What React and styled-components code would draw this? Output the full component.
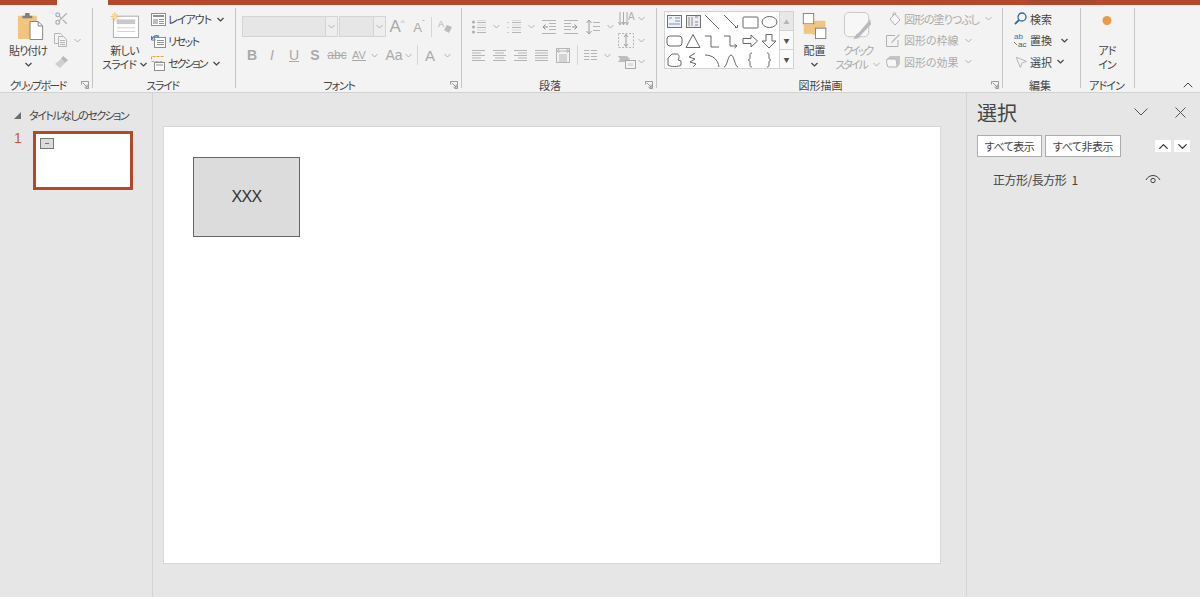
import React from 'react';
import styled, { createGlobalStyle } from 'styled-components';
import { Scissors, MousePointer2, ChevronDown, ChevronUp } from 'lucide-react';

const GlobalStyle = createGlobalStyle`
  html, body {
    margin: 0;
    height: 100%;
    overflow: hidden;
    background: #e6e6e6;
  }
  #root { height: 100%; }
  * { box-sizing: border-box; }
  body {
    font-family: "Noto Sans CJK JP", "Noto Sans", sans-serif;
    font-feature-settings: "palt";
    color: #444;
  }
`;

const Page = styled.div`
  width: 1200px;
  height: 597px;
  display: flex;
  flex-direction: column;
`;

const TitleStrip = styled.div`
  height: 5px;
  flex: none;
  background: #b7472a;
  display: flex;
  padding-left: 57px;
`;

const ActiveTab = styled.div`
  width: 51px;
  background: #f3f3f3;
`;

const TabHighlight = styled.div`
  width: 72px;
  height: 4px;
  margin-left: 919px;
  background: #a8492f;
  clip-path: polygon(0 0, 100% 0, 92% 100%, 8% 100%);
`;

const Ribbon = styled.div`
  height: 88px;
  flex: none;
  background: #f3f3f3;
  border-bottom: 1px solid #d2d2d2;
  display: flex;
  padding-top: 3px;
  position: relative;
`;

const Group = styled.section`
  width: ${p => p.$w}px;
  flex: none;
  height: 80px;
  border-right: 1px solid #c6c6c6;
  display: flex;
  flex-direction: column;
  position: relative;
`;

const GroupBody = styled.div`
  flex: 1;
  display: flex;
  min-height: 0;
  padding: ${p => p.$pad || '0'};
  gap: ${p => p.$gap || 0}px;
`;

const GroupLabel = styled.div`
  height: 15px;
  flex: none;
  margin-bottom: -5px;
  font-size: 11px;
  line-height: 15px;
  letter-spacing: ${p => p.$ls || 0}px;
  text-align: center;
  color: #444;
  white-space: nowrap;
  padding-right: ${p => p.$pr || 0}px;
`;

const Launcher = styled.svg`
  position: absolute;
  right: 3px;
  bottom: -1px;
  width: 8px;
  height: 8px;
`;

const BigButton = styled.div`
  width: ${p => p.$w}px;
  flex: none;
  padding-top: 4px;
  display: flex;
  flex-direction: column;
  align-items: center;
  font-size: 11px;
  line-height: 14px;
  color: ${p => (p.$off ? '#a9a9a9' : '#444')};
  white-space: nowrap;
`;

const BigIcon = styled.div`
  height: 28px;
  margin-bottom: 3px;
  padding-left: ${p => p.$shift || 0}px;
  padding-top: ${p => p.$drop || 0}px;
  display: flex;
  align-items: flex-start;
`;

const Line = styled.span`
  display: flex;
  align-items: center;
  height: 14px;
  letter-spacing: ${p => p.$ls || 0}px;
`;

const Stack = styled.div`
  display: flex;
  flex-direction: column;
  gap: ${p => p.$gap || 0}px;
  padding-top: ${p => p.$top || 0}px;
`;

const SmallRow = styled.div`
  height: ${p => p.$h || 21.5}px;
  display: flex;
  align-items: center;
  gap: ${p => p.$gap ?? 2}px;
  font-size: 11px;
  color: ${p => (p.$off ? '#ababab' : '#444')};
  white-space: nowrap;
`;

const RowText = styled.span`
  letter-spacing: ${p => p.$ls || 0}px;
`;

const Tools = styled.div`
  height: ${p => p.$h || 22}px;
  display: flex;
  align-items: center;
  gap: ${p => p.$gap || 0}px;
`;

const Slot = styled.div`
  width: ${p => p.$w}px;
  flex: none;
  display: flex;
  align-items: center;
  justify-content: ${p => (p.$start ? 'flex-start' : 'center')};
`;

const Divider = styled.div`
  width: 1px;
  height: 20px;
  background: #d6d6d6;
  flex: none;
`;

const FontSelect = styled.div`
  width: ${p => p.$w}px;
  height: 21px;
  flex: none;
  background: #e6e6e6;
  border: 1px solid #d4d4d4;
  display: flex;
  justify-content: flex-end;
`;

const SelectArrow = styled.div`
  width: 12px;
  background: #eeeeee;
  border-left: 1px solid #d4d4d4;
  display: flex;
  align-items: center;
  justify-content: center;
`;

const Glyph = styled.span`
  font-family: "Liberation Sans", sans-serif;
  font-size: ${p => p.$size || 14}px;
  font-weight: ${p => (p.$bold ? 700 : 400)};
  font-style: ${p => (p.$italic ? 'italic' : 'normal')};
  text-decoration: ${p => (p.$under ? 'underline' : p.$strike ? 'line-through' : 'none')};
  color: #a9a9a9;
  line-height: 1;
`;

const GlyphMark = styled.span`
  font-size: 8px;
  vertical-align: 7px;
`;

const Gallery = styled.div`
  width: 130px;
  height: 58px;
  flex: none;
  margin-top: 3px;
  background: #fff;
  border: 1px solid #d2d2d2;
  display: flex;
`;

const ShapeGrid = styled.div`
  width: 114px;
  display: grid;
  grid-template-columns: repeat(6, 19px);
  grid-template-rows: repeat(3, 19px);
  place-items: center;
`;

const GalleryScroll = styled.div`
  flex: 1;
  border-left: 1px solid #d2d2d2;
  display: flex;
  flex-direction: column;
`;

const ScrollStep = styled.div`
  flex: 1;
  background: ${p => (p.$off ? '#e8e8e8' : '#fafafa')};
  border-bottom: 1px solid #d2d2d2;
  display: flex;
  align-items: center;
  justify-content: center;
  font-size: 6px;
  color: ${p => (p.$off ? '#b5b5b5' : '#555')};
  &:last-child { border-bottom: 0; }
`;

const Collapse = styled.div`
  position: absolute;
  right: 4px;
  bottom: -1px;
  color: #444;
  display: flex;
`;

const Workspace = styled.div`
  flex: 1;
  display: flex;
  min-height: 0;
`;

const SlidePane = styled.aside`
  width: 153px;
  flex: none;
  border-right: 1px solid #d4d4d4;
  padding: 13px 0 0 14px;
`;

const SectionRow = styled.div`
  display: flex;
  align-items: center;
  gap: 8px;
  height: 18px;
  font-size: 11px;
  letter-spacing: -1.5px;
  color: #444;
  white-space: nowrap;
`;

const Triangle = styled.div`
  width: 0;
  height: 0;
  border-left: 7px solid transparent;
  border-bottom: 7px solid #6d6d6d;
`;

const ThumbRow = styled.div`
  display: flex;
  margin-top: 7px;
`;

const ThumbNumber = styled.div`
  width: 19px;
  flex: none;
  font-family: "Liberation Sans", sans-serif;
  font-size: 14px;
  line-height: 15px;
  color: #c8573a;
`;

const Thumb = styled.div`
  width: 100px;
  height: 59px;
  background: #fff;
  border: 3px solid #b7472a;
  position: relative;
`;

const ThumbShape = styled.div`
  position: absolute;
  left: 4px;
  top: 4px;
  width: 14px;
  height: 11px;
  background: #dcdcdc;
  border: 1px solid #777;
  display: flex;
  align-items: center;
  justify-content: center;
  &::after {
    content: "";
    width: 4px;
    height: 1px;
    background: #777;
  }
`;

const Editor = styled.main`
  flex: 1;
  padding: 34px 26px 0 11px;
`;

const Slide = styled.div`
  width: 776px;
  height: 436px;
  background: #fff;
  box-shadow: 0 0 0 1px #d6d6d6;
  position: relative;
`;

const SlideShape = styled.div`
  position: absolute;
  left: 29px;
  top: 30px;
  width: 107px;
  height: 80px;
  background: #dcdcdc;
  border: 1px solid #666;
  display: flex;
  align-items: center;
  justify-content: center;
  font-family: "Liberation Sans", sans-serif;
  font-size: 16px;
  letter-spacing: -0.7px;
  color: #333;
`;

const TaskPane = styled.aside`
  width: 235px;
  flex: none;
  border-left: 1px solid #d4d4d4;
  padding: 5px 11px 0 10px;
`;

const PaneHeader = styled.div`
  height: 28px;
  display: flex;
  align-items: center;
  justify-content: space-between;
  padding-right: 4px;
  color: #555;
`;

const PaneTitle = styled.h2`
  margin: 0;
  font-size: 20px;
  font-weight: 400;
  color: #444;
`;

const PaneIcons = styled.div`
  display: flex;
  align-items: center;
  gap: 27px;
`;

const PaneActions = styled.div`
  margin-top: 9px;
  display: flex;
  align-items: center;
  gap: 3px;
`;

const PaneButton = styled.button`
  height: 22px;
  width: ${p => p.$w}px;
  padding: 0;
  background: #fff;
  border: 1px solid #ababab;
  font: inherit;
  font-size: 11px;
  letter-spacing: -0.5px;
  color: #444;
  white-space: nowrap;
`;

const OrderButtons = styled.div`
  margin-left: auto;
  display: flex;
  gap: 3px;
`;

const OrderButton = styled.div`
  width: 16px;
  height: 12px;
  background: #fff;
  display: flex;
  align-items: center;
  justify-content: center;
  color: #333;
`;

const LayerRow = styled.div`
  margin-top: 11px;
  height: 22px;
  padding: 0 29px 0 16px;
  display: flex;
  align-items: center;
  justify-content: space-between;
  font-size: 12px;
  letter-spacing: -0.5px;
  word-spacing: 3px;
  color: #444;
`;

const Icon = ({ w = 16, h = 16, vb, children, ...rest }) => (
  <svg width={w} height={h} viewBox={vb || `0 0 ${w} ${h}`} fill="none" stroke="#b5b5b5" strokeWidth="1" {...rest}>
    {children}
  </svg>
);

const ChevSvg = styled.svg`
  width: 7px;
  height: 5px;
  flex: none;
  margin-left: ${p => p.$ml || 0}px;
  stroke: ${p => (p.$off ? '#b0b0b0' : '#444')};
  stroke-width: ${p => (p.$off ? 1 : 1.2)};
  fill: none;
`;

const Chev = ({ off, ml }) => (
  <ChevSvg viewBox="0 0 7 5" $off={off} $ml={ml}>
    <path d="M.5 1 3.5 4 6.5 1" />
  </ChevSvg>
);

const LauncherIcon = () => (
  <Launcher viewBox="0 0 9 9" fill="none" stroke="#8d8d8d">
    <path d="M.5 4V.5H8.5V8.5H5M2 2 7 7M7 4V7H4" />
  </Launcher>
);

const lines = (ys, x1, x2) => ys.map(y => `M${x1} ${y}H${x2}`).join('');

const PasteIcon = () => (
  <svg width="27" height="28" viewBox="0 0 30 31" fill="none">
    <rect x="1" y="4" width="21" height="26" rx="1" fill="#f1c47f" />
    <path d="M6 4h11v3H6zM9 1h5v3H9z" fill="#7f7f7f" />
    <path d="M14.500 10.500h9l5 5v15h-14z" fill="#fff" stroke="#7b7b7b" />
    <path d="M23.500 10.500v5h5" stroke="#7b7b7b" />
  </svg>
);

const NewSlideIcon = () => (
  <svg width="30" height="26" viewBox="0 0 32 28" fill="none">
    <rect x="3.500" y="4.500" width="27" height="23" fill="#fff" stroke="#a9a9a9" />
    <rect x="7" y="8" width="20" height="5" fill="#c9c9c9" />
    <path d="M7 17H27M7 21H27" stroke="#cfcfcf" />
    <path d="M5 .5v9M.5 5h9M2 2l6 6M8 2 2 8" stroke="#eab55a" />
    <rect x="3" y="3" width="4" height="4" fill="#f3d9a6" />
  </svg>
);

const LayoutIcon = () => (
  <Icon w={15} h={13} stroke="#8f8f8f">
    <rect x=".5" y=".5" width="14" height="12" fill="#fff" />
    <path d="M2 3h11" stroke="#8f8f8f" strokeWidth="2" />
    <rect x="2" y="6" width="5" height="5" fill="#bdbdbd" stroke="none" />
    <path d={lines([6.5, 8.5, 10.5], 8, 13)} />
  </Icon>
);

const ResetIcon = () => (
  <Icon w={15} h={14} stroke="#8f8f8f">
    <rect x="3.500" y="3.500" width="11" height="10" fill="#fff" />
    <path d={lines([6.5, 8.5, 10.5], 6, 13)} />
    <path d="M1 5C2 2 5 1 8 2.500" stroke="#4a78ad" strokeWidth="1.400" />
    <path d="M.5 2V6H4.500" stroke="#4a78ad" />
  </Icon>
);

const SectionIcon = () => (
  <Icon w={15} h={15} stroke="#8f8f8f">
    <path d="M.5 3.500V.5h13M.5 5.500h12" stroke="#e8a33d" strokeDasharray="3 1" />
    <rect x="3.500" y="6.500" width="10" height="8" fill="#fff" />
    <path d="M5 9h7" />
  </Icon>
);

const CopyIcon = () => (
  <Icon w={13} h={14}>
    <path d="M.5.5h6l2 2v8h-8z" fill="#f3f3f3" />
    <path d="M4.500 3.500h5l3 3v7h-8z" fill="#f3f3f3" />
    <path d={lines([7.5, 9.5, 11.5], 6, 11)} />
  </Icon>
);

const BrushIcon = () => (
  <Icon w={15} h={14} stroke="none">
    <path d="M9 1l5 4-3 3-4-4z" fill="#b8b8b8" />
    <path d="M7 4l4 4-5 5-5-4z" fill="#cfcfcf" />
  </Icon>
);

const ClearIcon = () => (
  <Icon w={16} h={15} stroke="none">
    <text x="0" y="8" fontSize="9" fontFamily="Liberation Sans" fill="#b0b0b0">A</text>
    <path d="M9 6l5 2-3 6-5-3z" fill="#bcbcbc" />
  </Icon>
);

const BulletIcon = ({ numbered }) => (
  <Icon w={14} h={14}>
    {numbered ? (
      <path d="M1 2v.6M1 7v.6M1 12v.6" stroke="#a8a8a8" strokeWidth="2.400" />
    ) : (
      <g fill="#adadad" stroke="none"><circle cx="1.500" cy="2" r="1.500" /><circle cx="1.500" cy="7" r="1.500" /><circle cx="1.500" cy="12" r="1.500" /></g>
    )}
    <path d={lines([2.5, 7.5, 12.5], 5, 14)} />
    <path d={lines([0.5, 5, 10], 5, 14)} stroke="#d8d8d8" />
  </Icon>
);

const IndentIcon = ({ className }) => (
  <Icon w={14} h={14} className={className}>
    <path d={lines([0.5, 13.5], 0, 14)} />
    <path d={lines([3.5, 6.5, 9.5], 7, 14)} />
    <path d="M6 7H1M3.500 4.500 1 7 3.500 9.500" stroke="#8f8f8f" />
  </Icon>
);

const OutdentIcon = styled(IndentIcon)`
  transform: scaleX(-1);
`;

const SpacingIcon = () => (
  <Icon w={14} h={16}>
    <path d="M3 1v14M.5 4 3 1 5.500 4M.5 12 3 15 5.500 12" stroke="#9d9d9d" />
    <path d={lines([3.5, 7.5, 11.5], 7, 14)} />
  </Icon>
);

const AlignIcon = ({ kind }) => {
  const rows = [0, 1, 2, 3, 4].map(i => {
    const short = i % 2 === 1 && kind !== 'justify';
    const w = short ? 9 : 13;
    const x = kind === 'left' ? 0 : kind === 'right' ? 13 - w : (13 - w) / 2;
    return `M${x} ${1.5 + i * 2.5}h${w}`;
  }).join('');
  return <Icon w={13} h={13}><path d={rows} /></Icon>;
};

const DistributeIcon = () => (
  <Icon w={14} h={15}>
    <rect x=".5" y=".5" width="13" height="14" />
    <path d="M3 3h8M1 3l2-1.500V4.500zM13 3l-2-1.500V4.500z" />
    <path d={lines([7, 9, 11, 13], 3, 11)} />
  </Icon>
);

const ColumnsIcon = () => (
  <Icon w={13} h={13}>
    <path d={lines([1.5, 4.5, 7.5, 10.5], 0, 5.5)} />
    <path d={lines([1.5, 4.5, 7.5, 10.5], 7, 13)} />
  </Icon>
);

const TextDirIcon = () => (
  <Icon w={18} h={16}>
    <path d="M2 1v12M5.500 1v12M9 1v12M.5 11 2 14 3.500 11M4 11 5.500 14 7 11M7.500 11 9 14 10.500 11" stroke="#a9a9a9" />
    <text x="10" y="9" fontSize="10" fontFamily="Liberation Sans" fill="#b0b0b0" stroke="none">A</text>
  </Icon>
);

const TextAlignIcon = () => (
  <Icon w={16} h={15}>
    <rect x=".5" y=".5" width="15" height="14" strokeDasharray="2 1.500" />
    <path d="M8 1.500v12M6 4 8 1.500 10 4M6 11 8 13.500 10 11" stroke="#9d9d9d" />
  </Icon>
);

const SmartArtIcon = () => (
  <Icon w={18} h={14} stroke="none">
    <path d="M0 1h9l3 3-3 3H0l2-3z" fill="#bdbdbd" />
    <rect x="7.500" y="5.500" width="10" height="8" fill="#f3f3f3" stroke="#a9a9a9" />
    <rect x="10" y="8" width="5" height="3" fill="#dedede" />
  </Icon>
);

const shapes = [
  <><rect x="1.500" y="1.500" width="14" height="12" fill="#eef1f6" stroke="#6f6f6f" /><path d="M3 4h3M9 4h5M9 7h5M3 10h11" stroke="#7c93b5" /></>,
  <><rect x="1.500" y="1.500" width="14" height="12" fill="#eeeeee" stroke="#6f6f6f" /><path d="M4 3v9M7 3v9" stroke="#8a8a8a" /><path d="M10 3h3M10 8h3M10 11h3" stroke="#6f88ad" /></>,
  <path d="M1 1 15 15" />,
  <><path d="M1 1 14 14" /><path d="M12 13.500h2.500V11" /></>,
  <rect x="1" y="3" width="15" height="11" rx="1" />,
  <ellipse cx="8.500" cy="8" rx="7.500" ry="5.500" />,
  <rect x="1" y="3" width="15" height="10" rx="3" />,
  <path d="M8 1.500 15 14.500H1z" />,
  <path d="M1 3H7V14H15" />,
  <><path d="M1 3H7V13H13" /><path d="M11.500 11 14 13 11.500 15" /></>,
  <path d="M1 5.500H9V2L15.500 8 9 14V10.500H1z" />,
  <path d="M5 1.500H11V8H15L8 15 1 8H5z" />,
  <path d="M2 6 6 2H11C13 2 14 5 12 8L15 9V13C13 15 4 15 2 13z" />,
  <path d="M10 1 4 5 10 7 5 10 11 12 8 15" />,
  <path d="M1 3C8 3 14 7 15 15" />,
  <path d="M1 15C4 15 5 3 8 3S12 15 15 15" />,
  <path d="M10 1C8 1 8 2 8 4V6C8 7 7 8 6 8 7 8 8 9 8 10V12C8 14 8 15 10 15" />,
  <path d="M6 1C8 1 8 2 8 4V6C8 7 9 8 10 8 9 8 8 9 8 10V12C8 14 8 15 6 15" />,
];

const ArrangeIcon = () => (
  <svg width="26" height="26" viewBox="0 0 28 30" fill="none">
    <rect x="11" y="9" width="15" height="16" fill="#f1c47f" />
    <rect x=".5" y=".5" width="12" height="12" fill="#fff" stroke="#777" />
    <rect x="1" y="13" width="11" height="11" fill="#f1c47f" />
    <rect x="14.500" y="17.500" width="12" height="12" fill="#fff" stroke="#777" />
  </svg>
);

const QuickStyleIcon = () => (
  <svg width="28" height="28" viewBox="0 0 30 30" fill="none">
    <rect x=".5" y=".5" width="26" height="26" rx="5" stroke="#c4c4c4" fill="#f7f7f7" />
    <path d="M28 8 16 22l-3 2-3 5c4 0 7-1 8-4L29 13z" fill="#b9b9b9" />
  </svg>
);

const FillIcon = () => (
  <Icon w={15} h={14} stroke="#b0b0b0">
    <path d="M4 7 9 2l5 6-5 5z" fill="#f7f7f7" />
    <path d="M7 4V1.500C7 .5 10 .5 10 2" />
  </Icon>
);

const LineIcon = () => (
  <Icon w={15} h={13} stroke="#b0b0b0">
    <path d="M9 1.500H.5V12.500H12V6" />
    <path d="M14 1 7 8l-2 2 1-3 7-7z" fill="#bdbdbd" stroke="none" />
  </Icon>
);

const EffectIcon = () => (
  <Icon w={15} h={13} stroke="#b0b0b0">
    <path d="M4 1h10v8l-3 3H1V4z" fill="#c5c5c5" stroke="none" />
    <path d="M1 4h8c2 0 2 8 2 8H3C1 12 0 6 1 4z" fill="#f7f7f7" />
  </Icon>
);

const SearchIcon = () => (
  <Icon w={13} h={13} stroke="#2f6aa8" strokeWidth="1.300">
    <circle cx="8" cy="5" r="4" />
    <path d="M5 8 1 12" strokeWidth="1.800" />
  </Icon>
);

const EyeIcon = () => (
  <Icon w={16} h={12} stroke="#444">
    <path d="M1 7C4 1 12 1 15 7" />
    <circle cx="8" cy="7.500" r="2.200" />
  </Icon>
);

const ReplaceIcon = () => (
  <svg width="14" height="16" viewBox="0 0 14 16" fill="none">
    <text x="0" y="7" fontSize="8" fontFamily="Liberation Sans" fill="#3f6ea3">ab</text>
    <text x="4" y="15" fontSize="8" fontFamily="Liberation Sans" fill="#555">ac</text>
    <path d="M0 10 3 13" stroke="#777" />
  </svg>
);

const PaneChevron = () => (
  <svg width="14" height="8" viewBox="0 0 14 8" fill="none" stroke="#555">
    <path d="M.5.5 7 7 13.500.5" />
  </svg>
);

const PaneClose = () => (
  <svg width="11" height="11" viewBox="0 0 11 11" fill="none" stroke="#555">
    <path d="M.5.5 10.500 10.500M10.500.5.5 10.500" />
  </svg>
);

const App = () => (
  <Page>
    <GlobalStyle />
    <TitleStrip>
      <ActiveTab />
      <TabHighlight />
    </TitleStrip>
    <Ribbon>
      <Group $w={93}>
        <GroupBody $pad="0 0 0 9px" $gap={7}>
          <BigButton $w={38}>
            <BigIcon $shift={5}><PasteIcon /></BigIcon>
            <Line $ls={-1}>貼り付け</Line>
            <Line><Chev /></Line>
          </BigButton>
          <Stack>
            <SmallRow><Scissors size={15} color="#b0b0b0" /></SmallRow>
            <SmallRow $gap={7}><CopyIcon /><Chev off /></SmallRow>
            <SmallRow><BrushIcon /></SmallRow>
          </Stack>
        </GroupBody>
        <GroupLabel $pr={17} $ls={-1.7}>クリップボード</GroupLabel>
        <LauncherIcon />
      </Group>

      <Group $w={143}>
        <GroupBody $pad="0 0 0 9px" $gap={4}>
          <BigButton $w={45}>
            <BigIcon><NewSlideIcon /></BigIcon>
            <Line $ls={-0.7}>新しい</Line>
            <Line $ls={-1}>スライド<Chev ml={4} /></Line>
          </BigButton>
          <Stack>
            <SmallRow $h={22}><LayoutIcon /><RowText $ls={-1}>レイアウト</RowText><Chev ml={4} /></SmallRow>
            <SmallRow $h={22}><ResetIcon /><RowText $ls={-1.5}>リセット</RowText></SmallRow>
            <SmallRow $h={22}><SectionIcon /><RowText $ls={-2}>セクション</RowText><Chev ml={5} /></SmallRow>
          </Stack>
        </GroupBody>
        <GroupLabel $pr={3} $ls={-1.4}>スライド</GroupLabel>
      </Group>

      <Group $w={226}>
        <GroupBody $pad="8px 0 0 6px">
          <Stack $gap={7}>
            <Tools $h={21} $gap={1}>
              <FontSelect $w={96}><SelectArrow><Chev off /></SelectArrow></FontSelect>
              <FontSelect $w={47}><SelectArrow><Chev off /></SelectArrow></FontSelect>
              <Slot $w={20}><Glyph $size={17}>A<GlyphMark>^</GlyphMark></Glyph></Slot>
              <Slot $w={22}><Glyph $size={13}>A<GlyphMark>ˇ</GlyphMark></Glyph></Slot>
              <Divider />
              <Slot $w={26}><ClearIcon /></Slot>
            </Tools>
            <Tools $h={22}>
              <Slot $w={20}><Glyph $bold $size={14}>B</Glyph></Slot>
              <Slot $w={20}><Glyph $italic $size={14}>I</Glyph></Slot>
              <Slot $w={24}><Glyph $under $size={14}>U</Glyph></Slot>
              <Slot $w={18}><Glyph $bold $size={14}>S</Glyph></Slot>
              <Slot $w={26}><Glyph $strike $size={12}>abc</Glyph></Slot>
              <Slot $w={30}><Glyph $under $size={11}>AV</Glyph><Chev off ml={5} /></Slot>
              <Slot $w={37}><Glyph $size={14}>Aa</Glyph><Chev off ml={2} /></Slot>
              <Divider />
              <Slot $w={40}><Glyph $size={15}>A</Glyph><Chev off ml={9} /></Slot>
            </Tools>
          </Stack>
        </GroupBody>
        <GroupLabel $pr={19} $ls={-1.2}>フォント</GroupLabel>
        <LauncherIcon />
      </Group>

      <Group $w={195}>
        <GroupBody $pad="0 0 0 10px">
          <Stack $gap={7} $top={8}>
            <Tools $h={21}>
              <Slot $w={35} $start><BulletIcon /><Chev off ml={7} /></Slot>
              <Slot $w={35} $start><BulletIcon numbered /><Chev off ml={7} /></Slot>
              <Slot $w={22} $start><IndentIcon /></Slot>
              <Slot $w={22} $start><OutdentIcon /></Slot>
              <Slot $w={32} $start><SpacingIcon /><Chev off ml={7} /></Slot>
            </Tools>
            <Tools $h={22}>
              <Slot $w={21} $start><AlignIcon kind="left" /></Slot>
              <Slot $w={21} $start><AlignIcon kind="center" /></Slot>
              <Slot $w={21} $start><AlignIcon kind="right" /></Slot>
              <Slot $w={21} $start><AlignIcon kind="justify" /></Slot>
              <Slot $w={21} $start><DistributeIcon /></Slot>
              <Divider />
              <Slot $w={38}><ColumnsIcon /><Chev off ml={7} /></Slot>
            </Tools>
          </Stack>
          <Stack>
            <SmallRow $off $gap={2}><TextDirIcon /><Chev off /></SmallRow>
            <SmallRow $off $gap={4}><TextAlignIcon /><Chev off /></SmallRow>
            <SmallRow $off $gap={2}><SmartArtIcon /><Chev off /></SmallRow>
          </Stack>
        </GroupBody>
        <GroupLabel $pr={18}>段落</GroupLabel>
        <LauncherIcon />
      </Group>

      <Group $w={346}>
        <GroupBody $pad="0 0 0 7px" $gap={6}>
          <Gallery>
            <ShapeGrid>
              {shapes.map((s, i) => (
                <svg key={i} width="17" height="16" viewBox="0 0 17 16" fill="none" stroke="#666">{s}</svg>
              ))}
            </ShapeGrid>
            <GalleryScroll>
              <ScrollStep $off>▲</ScrollStep>
              <ScrollStep>▼</ScrollStep>
              <ScrollStep>▼</ScrollStep>
            </GalleryScroll>
          </Gallery>
          <BigButton $w={29}>
            <BigIcon $drop={1}><ArrangeIcon /></BigIcon>
            <Line>配置</Line>
            <Line><Chev /></Line>
          </BigButton>
          <BigButton $w={45} $off>
            <BigIcon><QuickStyleIcon /></BigIcon>
            <Line $ls={-2.4}>クイック</Line>
            <Line $ls={-2}>スタイル<Chev off ml={6} /></Line>
          </BigButton>
          <Stack>
            <SmallRow $off $gap={3}><FillIcon /><RowText $ls={-1}>図形の塗りつぶし</RowText><Chev off ml={3} /></SmallRow>
            <SmallRow $off $gap={3}><LineIcon />図形の枠線<Chev off ml={3} /></SmallRow>
            <SmallRow $off $gap={3}><EffectIcon />図形の効果<Chev off ml={3} /></SmallRow>
          </Stack>
        </GroupBody>
        <GroupLabel $pr={18}>図形描画</GroupLabel>
        <LauncherIcon />
      </Group>

      <Group $w={78}>
        <GroupBody $pad="0 0 0 11px">
          <Stack>
            <SmallRow $gap={3}><SearchIcon />検索</SmallRow>
            <SmallRow $gap={2}><ReplaceIcon />置換<Chev ml={7} /></SmallRow>
            <SmallRow $gap={2}><MousePointer2 size={14} color="#8a8a8a" strokeWidth={1} />選択<Chev ml={3} /></SmallRow>
          </Stack>
        </GroupBody>
        <GroupLabel $pr={3}>編集</GroupLabel>
      </Group>

      <Group $w={54}>
        <GroupBody>
          <BigButton $w={52}>
            <BigIcon>
              <svg width="10" height="26" viewBox="0 0 10 26"><circle cx="5" cy="8.500" r="4.500" fill="#ea9a44" /></svg>
            </BigIcon>
            <Line $ls={-1}>アド</Line>
            <Line $ls={-1}>イン</Line>
          </BigButton>
        </GroupBody>
        <GroupLabel $pr={2} $ls={-0.9}>アドイン</GroupLabel>
      </Group>

      <Collapse><ChevronUp size={16} strokeWidth={1.5} /></Collapse>
    </Ribbon>

    <Workspace>
      <SlidePane>
        <SectionRow><Triangle />タイトルなしのセクション</SectionRow>
        <ThumbRow>
          <ThumbNumber>1</ThumbNumber>
          <Thumb><ThumbShape /></Thumb>
        </ThumbRow>
      </SlidePane>

      <Editor>
        <Slide>
          <SlideShape>XXX</SlideShape>
        </Slide>
      </Editor>

      <TaskPane>
        <PaneHeader>
          <PaneTitle>選択</PaneTitle>
          <PaneIcons>
            <PaneChevron />
            <PaneClose />
          </PaneIcons>
        </PaneHeader>
        <PaneActions>
          <PaneButton $w={65}>すべて表示</PaneButton>
          <PaneButton $w={76}>すべて非表示</PaneButton>
          <OrderButtons>
            <OrderButton><ChevronUp size={15} strokeWidth={2} /></OrderButton>
            <OrderButton><ChevronDown size={15} strokeWidth={2} /></OrderButton>
          </OrderButtons>
        </PaneActions>
        <LayerRow>
          <span>正方形/長方形 1</span>
          <EyeIcon />
        </LayerRow>
      </TaskPane>
    </Workspace>
  </Page>
);

export default App;
